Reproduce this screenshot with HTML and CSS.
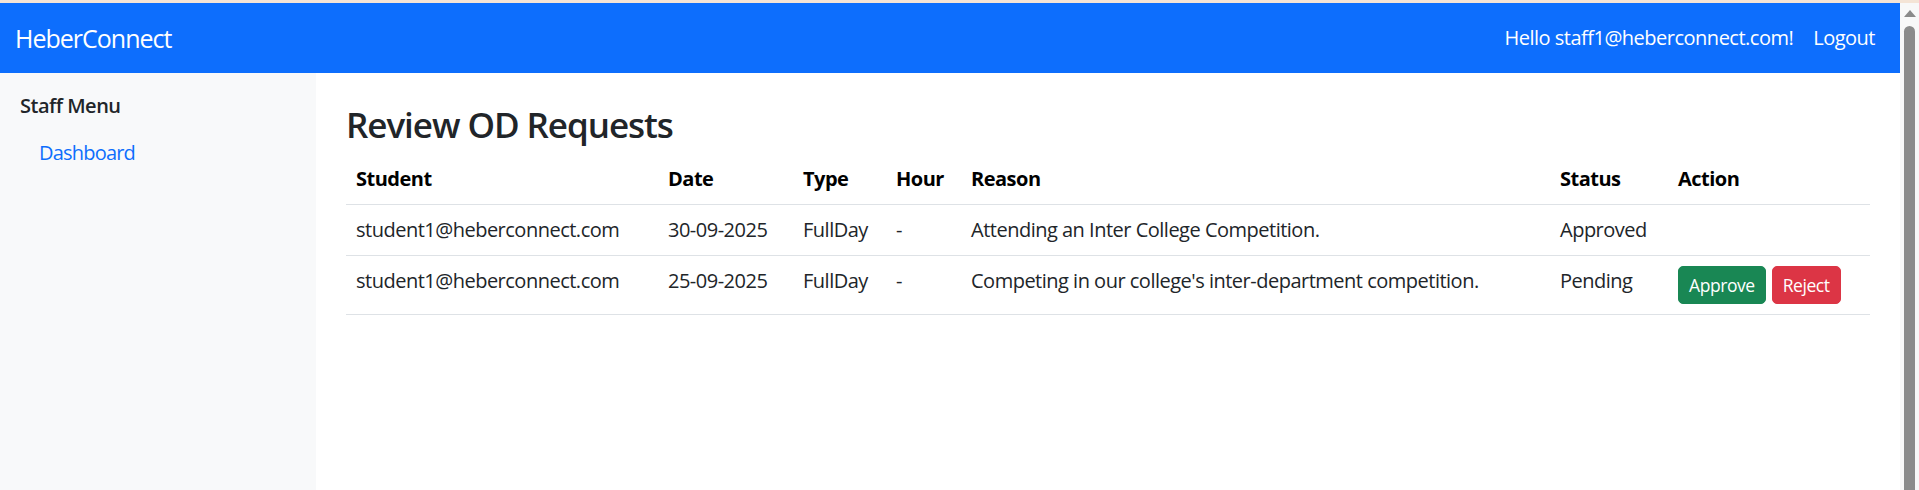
FILE: index.html
```html
<!DOCTYPE html>
<html lang="en">
<head>
<meta charset="utf-8">
<title>Review OD Requests - HeberConnect</title>
<link rel="stylesheet" href="styles.css">
</head>
<body>
<div class="window">
  <div class="page">
    <header class="navbar">
      <a class="brand" href="#">HeberConnect</a>
      <ul class="nav-right">
        <li><a class="nav-link" href="#">Hello staff1@heberconnect.com!</a></li>
        <li><a class="nav-link" href="#">Logout</a></li>
      </ul>
    </header>
    <div class="layout">
      <aside class="sidebar">
        <h5 class="sidebar-title">Staff Menu</h5>
        <ul class="side-nav">
          <li><a class="side-link" href="#">Dashboard</a></li>
        </ul>
      </aside>
      <main class="main">
        <h3 class="page-title">Review OD Requests</h3>
        <table class="table">
          <colgroup>
            <col class="c-student"><col class="c-date"><col class="c-type"><col class="c-hour"><col class="c-reason"><col class="c-status"><col class="c-action">
          </colgroup>
          <thead>
            <tr><th>Student</th><th>Date</th><th>Type</th><th>Hour</th><th>Reason</th><th>Status</th><th>Action</th></tr>
          </thead>
          <tbody>
            <tr>
              <td>student1@heberconnect.com</td><td>30-09-2025</td><td>FullDay</td><td>-</td>
              <td>Attending an Inter College Competition.</td><td>Approved</td><td></td>
            </tr>
            <tr>
              <td>student1@heberconnect.com</td><td>25-09-2025</td><td>FullDay</td><td>-</td>
              <td>Competing in our college's inter-department competition.</td><td>Pending</td>
              <td><div class="actions"><button class="btn btn-approve">Approve</button><button class="btn btn-reject">Reject</button></div></td>
            </tr>
          </tbody>
        </table>
      </main>
    </div>
  </div>
  <div class="scrollbar">
    <div class="sb-arrow"></div>
    <div class="sb-thumb"></div>
  </div>
</div>
</body>
</html>
```
FILE: styles.css
```css
html, body {
  margin: 0;
  height: 490px;
  overflow: hidden;
}
body {
  box-sizing: border-box;
  border-top: 3px solid #f4e4d6;
  font-family: "Open Sans", "Noto Sans", "Liberation Sans", sans-serif;
  font-size: 20px;
  line-height: 1.5;
  letter-spacing: -0.025em;
  color: #212529;
  background: #fff;
}
.window {
  display: flex;
  height: 487px;
}
.page {
  flex: 1;
  min-width: 0;
  display: flex;
  flex-direction: column;
}
.navbar {
  height: 70px;
  flex: none;
  box-sizing: border-box;
  background: #0d6efd;
  display: flex;
  align-items: center;
  justify-content: space-between;
  padding: 0 15px;
}
.brand {
  color: #fff;
  font-size: 25px;
  text-decoration: none;
  line-height: 1.5;
  letter-spacing: -0.04em;
  margin-top: 2px;
}
.nav-right {
  display: flex;
  list-style: none;
  margin: 0;
  padding: 0;
}
.nav-link {
  display: block;
  color: #fff;
  text-decoration: none;
  padding: 10px;
}
.layout {
  flex: 1;
  display: flex;
  min-height: 0;
}
.sidebar {
  width: 316px;
  flex: none;
  box-sizing: border-box;
  background: #f8f9fa;
  padding: 21px 20px 0;
}
.sidebar-title {
  margin: 0 0 10px;
  font-size: 20px;
  font-weight: 600;
  line-height: 1.2;
}
.side-nav {
  list-style: none;
  margin: 0;
  padding: 0;
}
.side-link {
  display: block;
  padding: 10px 20px 10px 19px;
  color: #0d6efd;
  text-decoration: none;
  letter-spacing: -0.04em;
}
.main {
  flex: 1;
  min-width: 0;
  padding: 31px 30px 0;
}
.page-title {
  margin: 0 0 8px;
  font-size: 35px;
  font-weight: 600;
  line-height: 1.2;
  letter-spacing: -0.03em;
}
.table {
  width: 100%;
  table-layout: fixed;
  border-collapse: collapse;
  color: #212529;
}
.c-student { width: 312px; }
.c-date { width: 135px; }
.c-type { width: 93px; }
.c-hour { width: 75px; }
.c-reason { width: 589px; }
.c-status { width: 118px; }
.c-action { width: 202px; }
.table th,
.table td {
  padding: 10px;
  text-align: left;
  vertical-align: top;
  border-bottom: 1px solid #dee2e6;
  white-space: nowrap;
}
.table th {
  font-weight: 700;
  color: #000;
}
.actions {
  display: flex;
  gap: 6px;
}
.btn {
  font-family: inherit;
  font-size: 17.5px;
  letter-spacing: -0.025em;
  line-height: 1.5;
  padding: 5px 10px;
  border: 1px solid transparent;
  border-radius: 5px;
  color: #fff;
  cursor: pointer;
}
.btn-approve {
  background: #198754;
  border-color: #198754;
}
.btn-reject {
  background: #dc3545;
  border-color: #dc3545;
}
.scrollbar {
  width: 19px;
  flex: none;
  background: #f8f8f8;
  display: flex;
  flex-direction: column;
  align-items: center;
}
.sb-arrow {
  margin-top: 7px;
  width: 0;
  height: 0;
  border-left: 6.5px solid transparent;
  border-right: 6.5px solid transparent;
  border-bottom: 7px solid #8a8a8a;
}
.sb-thumb {
  margin-top: 9px;
  width: 11px;
  flex: 1;
  background: #8b8b8b;
  border-radius: 6px 6px 0 0;
}
```
